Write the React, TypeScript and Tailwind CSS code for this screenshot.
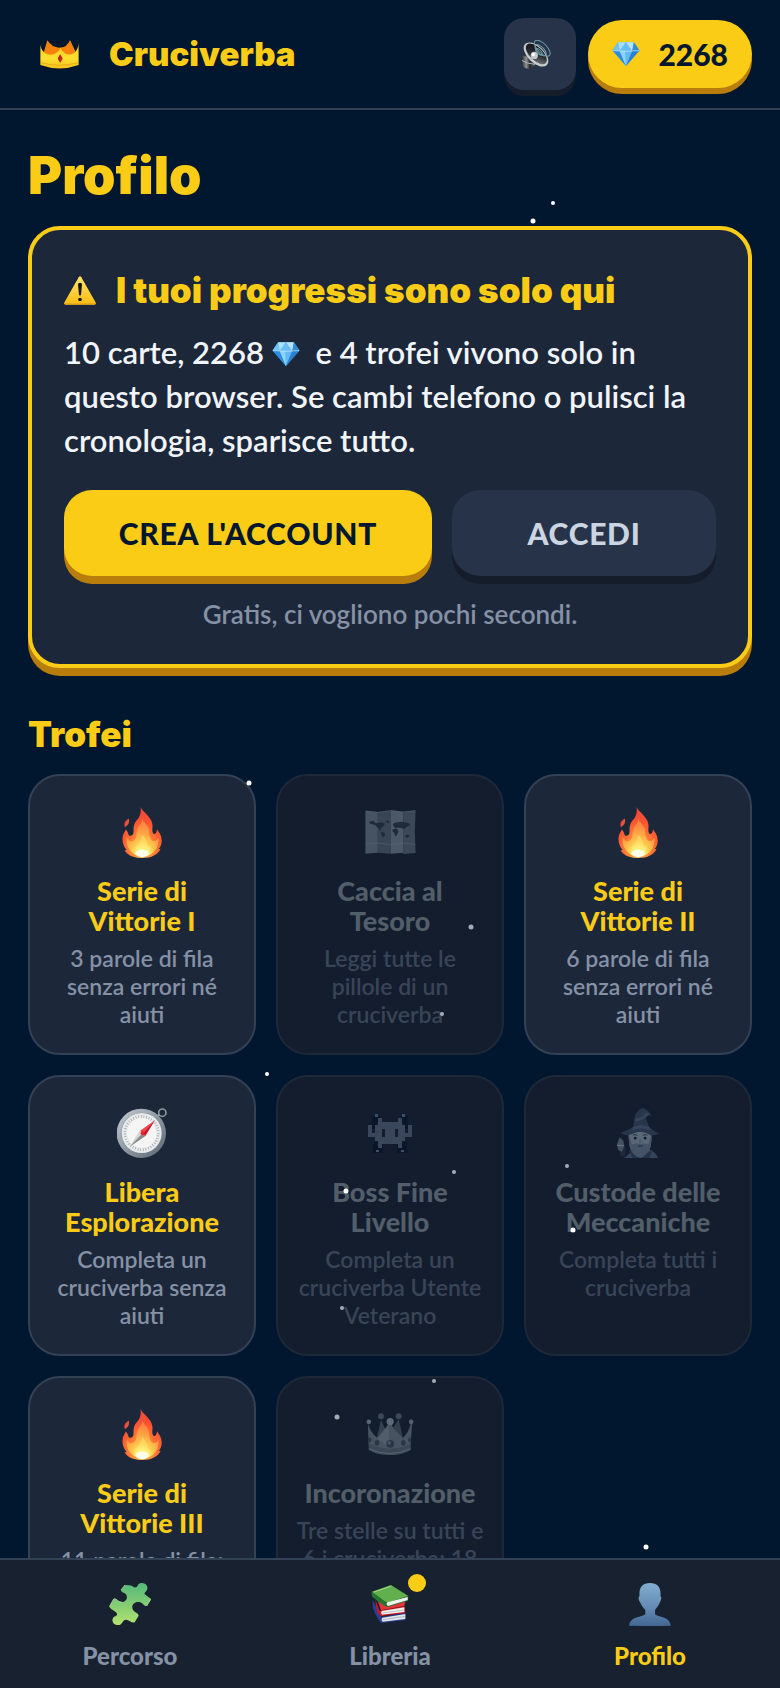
import { useState } from "react";
import type { ReactNode } from "react";

type IconProps = { className?: string };

function LogoCrown({ className }: IconProps) {
  return (
    <svg viewBox="0 0 118 88" className={className} aria-hidden="true">
      <defs>
        <linearGradient id="logoBand" x1="0" y1="0" x2="0" y2="1">
          <stop offset="0" stopColor="#fbc81f" />
          <stop offset="0.6" stopColor="#fde02f" />
          <stop offset="1" stopColor="#f5c21c" />
        </linearGradient>
      </defs>
      <path d="M10 42 L22 1 Q38 25 62 23 Q80 24 91 0 L110 40 L90 56 H30Z" fill="#f5820d" />
      <path d="M1 12 C3 50 50 56 62 23 C74 56 115 50 117 8 V76 Q59 97 1 76Z" fill="url(#logoBand)" />
      <path d="M2 69 Q59 84 116 69" fill="none" stroke="#e9ac17" strokeWidth="3" />
      <path d="M61 43 L69 56 L61 69 L54 56Z" fill="#d3251c" />
      <path d="M61 43 L61 69 L54 56Z" fill="#a3271b" />
    </svg>
  );
}

function Speaker({ className }: IconProps) {
  return (
    <svg viewBox="0 0 90 88" className={className} aria-hidden="true">
      <defs>
        <linearGradient id="spkBody" x1="0" y1="0" x2="1" y2="0">
          <stop offset="0" stopColor="#1c1c1e" />
          <stop offset="0.35" stopColor="#8f9294" />
          <stop offset="0.6" stopColor="#26272a" />
          <stop offset="1" stopColor="#5c5f62" />
        </linearGradient>
        <linearGradient id="spkCone" x1="0" y1="0" x2="1" y2="1">
          <stop offset="0" stopColor="#0b0c0e" />
          <stop offset="0.55" stopColor="#2b2e32" />
          <stop offset="1" stopColor="#8b9094" />
        </linearGradient>
      </defs>
      <path d="M4 46 L0 64 Q1 86 24 88 Q34 87 42 76 L44 60 Z" fill="url(#spkBody)" />
      <path d="M2 62 Q18 72 42 74" fill="none" stroke="#b6b9bb" strokeWidth="3" />
      <ellipse cx="45" cy="44" rx="46" ry="25" transform="rotate(44 45 44)" fill="#c9cccd" />
      <ellipse cx="46" cy="42" rx="40" ry="20" transform="rotate(44 46 42)" fill="url(#spkCone)" />
      <circle cx="40" cy="47" r="11" fill="#c5c8ca" />
      <circle cx="37" cy="44" r="5" fill="#ffffff" />
      <g fill="none" stroke="#6f9daa" strokeWidth="3">
        <ellipse cx="64" cy="25" rx="31" ry="14" transform="rotate(45 64 25)" />
        <ellipse cx="59" cy="31" rx="22" ry="10" transform="rotate(45 59 31)" />
        <ellipse cx="54" cy="36" rx="12" ry="6" transform="rotate(45 54 36)" />
      </g>
    </svg>
  );
}

function Gem({ className }: IconProps) {
  return (
    <svg viewBox="0 0 82 73" className={className} aria-hidden="true">
      <path d="M17 1 H65 L82 26 L41 73 L0 26Z" fill="#48a9ee" />
      <path d="M17 1 L0 26 L22 27Z" fill="#6fc3f6" />
      <path d="M17 1 H41 L22 27Z" fill="#a9e0fc" />
      <path d="M41 1 L22 27 H60Z" fill="#6cbcf4" />
      <path d="M41 1 H65 L60 27Z" fill="#b5e5fd" />
      <path d="M65 1 L82 26 L60 27Z" fill="#3689d6" />
      <path d="M0 26 L22 27 L41 73Z" fill="#2c8ce0" />
      <path d="M22 27 H60 L41 73Z" fill="#63bbf5" />
      <path d="M22 27 H38 L41 73Z" fill="#8dd3fb" />
      <path d="M60 27 L82 26 L41 73Z" fill="#2b7fd3" />
      <path d="M1 26 Q41 31 81 26" fill="none" stroke="#cbeefe" strokeWidth="2" />
    </svg>
  );
}

function Warning({ className }: IconProps) {
  return (
    <svg viewBox="0 0 96 86" className={className} aria-hidden="true">
      <defs>
        <linearGradient id="warnFill" x1="0" y1="0" x2="0" y2="1">
          <stop offset="0" stopColor="#fbe36b" />
          <stop offset="1" stopColor="#fdbd12" />
        </linearGradient>
      </defs>
      <path d="M44 3 Q48 -2 52 3 L95 79 Q97 86 90 86 H6 Q-1 86 1 79Z" fill="url(#warnFill)" />
      <path d="M2 82 Q4 86 8 86 H88 Q94 86 95 82Z" fill="#d99b16" />
      <path d="M42 25 Q42 20 48 20 Q54 20 54 25 L51 56 Q48 61 45 56Z" fill="#15140f" />
      <circle cx="48" cy="70" r="5.5" fill="#15140f" />
    </svg>
  );
}

function Flame({ className }: IconProps) {
  return (
    <svg viewBox="0 0 119 154" className={className} aria-hidden="true">
      <defs>
        <radialGradient id="flameOuter" cx="0.5" cy="0.85" r="0.85">
          <stop offset="0" stopColor="#ffc34a" />
          <stop offset="0.4" stopColor="#fe7a35" />
          <stop offset="0.7" stopColor="#fa5033" />
          <stop offset="1" stopColor="#f04a38" />
        </radialGradient>
        <radialGradient id="flameInner" cx="0.5" cy="0.95" r="0.9">
          <stop offset="0" stopColor="#ffffff" />
          <stop offset="0.2" stopColor="#fff27a" />
          <stop offset="0.4" stopColor="#ffc94e" />
          <stop offset="0.7" stopColor="#ff9c42" />
          <stop offset="1" stopColor="#fd7b3b" />
        </radialGradient>
      </defs>
      <path
        d="M55 0 C61 15 88 28 91 53 C92 65 88 73 94 81 C101 83 104 76 105 67 C110 76 120 84 119 105 C118 115 115 121 110 126 C112 127 114 127 116 126 C108 144 88 154 60 154 C34 154 14 145 6 129 C9 131 11 131 13 130 C4 120 -1 105 1 91 C3 79 8 76 10 68 C15 71 17 78 20 86 C27 89 34 85 34 74 C34 61 34 51 43 41 C54 29 58 15 55 0Z"
        fill="url(#flameOuter)"
      />
      <path
        d="M61 34 C60 49 48 56 45 70 C41 88 44 96 32 103 C22 107 17 98 14 92 C9 112 18 139 58 152 C96 147 112 122 109 93 C104 103 97 105 90 101 C82 96 82 82 80 69 C78 54 64 48 61 34Z"
        fill="url(#flameInner)"
      />
      <path d="M58 82 C61 98 52 103 50 112 C40 118 34 126 38 139 Q58 154 82 141 C89 130 84 120 75 115 C76 101 68 92 58 82Z" fill="#fff07c" opacity="0.4" />
      <ellipse cx="60" cy="140" rx="20" ry="12" fill="#ffffff" opacity="0.75" />
      <path d="M20 35 C7 43 4 51 8 61 C18 55 22 48 20 35Z" fill="#ef4d3e" />
    </svg>
  );
}

function WorldMap({ className }: IconProps) {
  return (
    <svg viewBox="0 0 153 134" className={className} aria-hidden="true">
      <path d="M0 2 L38 6 V130 L0 133Z" fill="#465362" />
      <path d="M38 6 L78 1 V133 L38 130Z" fill="#394555" />
      <path d="M78 1 L115 5 V130 L78 133Z" fill="#4b5867" />
      <path d="M115 5 L153 1 Q148 65 153 131 L115 134Z" fill="#3c4858" />
      <path d="M1 104 L38 101 L78 105 L115 101 L152 105" fill="none" stroke="#5b6876" strokeWidth="4" opacity="0.4" />
      <path d="M1 3 L38 7 L78 2 L115 6 L152 2" fill="none" stroke="#626f7d" strokeWidth="2" opacity="0.6" />
      <g fill="#1f2b3a">
        <path d="M12 36 L25 33 L31 40 L50 37 L60 42 L53 51 L47 56 L46 65 L38 54 L29 46 L13 41Z" />
        <path d="M47 66 L58 69 L60 76 L54 84 L50 78Z" />
        <path d="M64 32 L73 34 L70 40 L64 38Z" />
        <path d="M84 43 L92 38 L112 36 L134 41 L137 46 L128 50 L119 57 L108 55 L100 53 L92 56 L86 50Z" />
        <path d="M84 58 L97 58 L101 66 L95 77 L91 80 L88 70 L82 65Z" />
        <path d="M121 76 L131 75 L134 81 L124 85Z" />
      </g>
    </svg>
  );
}

function Compass({ className }: IconProps) {
  return (
    <svg viewBox="0 0 150 150" className={className} aria-hidden="true">
      <defs>
        <linearGradient id="compassRim" x1="0" y1="0" x2="1" y2="1">
          <stop offset="0" stopColor="#c6ced5" />
          <stop offset="0.5" stopColor="#8f99a3" />
          <stop offset="1" stopColor="#596471" />
        </linearGradient>
      </defs>
      <circle cx="136" cy="14" r="11" fill="none" stroke="#8d969d" strokeWidth="5" />
      <path d="M116 31 L126 20" stroke="#a8afb5" strokeWidth="7" />
      <circle cx="73" cy="76" r="74" fill="url(#compassRim)" />
      <circle cx="74" cy="75" r="61" fill="#7c868f" />
      <circle cx="74" cy="75" r="60" fill="#e9eaeb" />
      <circle cx="74" cy="75" r="50" fill="none" stroke="#9b9ea0" strokeWidth="8" strokeDasharray="2 6" />
      <circle cx="74" cy="75" r="44" fill="#f5f5f5" />
      <path d="M68 68 L85 84 L38 116Z" fill="#d2d4d5" />
      <path d="M77 76 L85 84 L38 116Z" fill="#858789" />
      <path d="M114 37 L69 68 L77 76Z" fill="#ee4650" />
      <path d="M114 37 L85 84 L77 76Z" fill="#ca1522" />
      <circle cx="77" cy="76" r="6" fill="#e5222f" />
    </svg>
  );
}

const INVADER_ROWS = [
  "0001000001000",
  "0001111111000",
  "1011111111101",
  "1011011101101",
  "1111011101111",
  "0011111111100",
  "0001111111000",
  "0001000001000",
];

function Invader({ className }: IconProps) {
  return (
    <svg viewBox="0 0 130 116" className={className} aria-hidden="true" shapeRendering="crispEdges">
      <g fill="#0a172b">
        <path d="M12 6 H34 V26 H24 V44 H10 V20 H12Z M118 6 H96 V26 H106 V44 H120 V20 H118Z" />
        <path d="M15 84 H45 V116 H15Z M85 84 H115 V116 H85Z" />
      </g>
      {INVADER_ROWS.map((row, y) =>
        row.split("").map((cell, x) =>
          cell === "1" ? <rect key={`${x}-${y}`} x={x * 10} y={12 + y * 11} width="11" height="12" fill="#3a465a" /> : null,
        ),
      )}
      <g fill="#414d60">
        <path d="M20 0 h8 v8 h-8Z M102 0 h8 v8 h-8Z M23 106 h8 v7 h-8Z M99 106 h8 v7 h-8Z" />
      </g>
    </svg>
  );
}

function Mage({ className }: IconProps) {
  return (
    <svg viewBox="0 0 129 154" className={className} aria-hidden="true">
      <path d="M8 122 L18 96 L28 122 L25 146 H12Z" fill="#1b2a3e" />
      <path d="M22 151 Q42 137 51 120 L92 121 Q118 132 125 151Z" fill="#35445a" />
      <path d="M37 126 L53 136 L72 152 L91 136 L108 129 L99 151 H48Z" fill="#243349" />
      <path d="M1 110 L9 88 L20 98 L23 115 L16 132 L5 127Z" fill="#45515f" />
      <path d="M1 113 H22" stroke="#6b7680" strokeWidth="3" />
      <path d="M36 78 Q36 55 70 55 Q106 57 105 81 Q109 116 91 134 Q71 153 50 134 Q36 117 36 78Z" fill="#5a6776" />
      <path d="M36 84 Q43 96 46 110 Q60 106 71 108 Q85 106 96 110 Q98 96 105 82 L103 118 Q91 145 71 151 Q44 142 38 113Z" fill="#455366" />
      <circle cx="56" cy="91" r="4" fill="#101c2c" />
      <circle cx="86" cy="91" r="4" fill="#101c2c" />
      <path d="M49 82 Q56 78 62 83 M79 83 Q86 78 93 82" stroke="#263447" strokeWidth="3" fill="none" />
      <path d="M71 92 L67 105 H75Z" fill="#465468" />
      <path d="M64 116 Q71 112 79 116" fill="none" stroke="#222f42" strokeWidth="3" />
      <path d="M12 75 Q32 69 50 57 L55 25 Q60 8 77 0 Q99 6 105 25 Q92 19 86 26 L98 57 Q112 70 128 77 Q105 87 99 80 Q70 63 43 80 Q25 86 12 75Z" fill="#27364b" />
      <path d="M50 57 Q73 47 98 57 L103 67 Q72 56 46 68Z" fill="#35445a" />
      <path d="M57 31 Q78 29 88 15 Q94 14 99 17 Q84 38 55 41Z" fill="#35445a" />
    </svg>
  );
}

function Crown({ className }: IconProps) {
  return (
    <svg viewBox="0 0 145 128" className={className} aria-hidden="true">
      <path d="M31 83 L45 20 L66 70 L99 18 L113 83Z" fill="#35404e" />
      <circle cx="45" cy="10" r="9" fill="#3c4856" />
      <circle cx="99" cy="10" r="9" fill="#3c4856" />
      <path
        d="M5 32 Q13 60 34 76 Q53 61 69 33 H75 Q93 62 112 76 Q129 60 136 32 L140 33 L134 112 Q107 130 67 128 Q28 127 8 112Z"
        fill="#475361"
      />
      <path d="M9 94 Q73 124 136 94 L134 114 Q72 139 9 113Z" fill="#3b4755" />
      <path d="M69 33 L34 76 Q55 92 68 108Z" fill="#576371" opacity="0.7" />
      <path d="M8 109 Q71 138 136 109" stroke="#596573" strokeWidth="3" fill="none" />
      <circle cx="8" cy="27" r="7" fill="#5a6674" />
      <circle cx="73" cy="26" r="11" fill="#5d6976" />
      <circle cx="137" cy="27" r="7" fill="#566270" />
      <g fill="#293646">
        <circle cx="73" cy="94" r="12" />
        <ellipse cx="33" cy="91" rx="7" ry="9" />
        <ellipse cx="113" cy="91" rx="7" ry="9" />
        <ellipse cx="12" cy="82" rx="4" ry="7" />
        <ellipse cx="132" cy="82" rx="4" ry="7" />
      </g>
      <circle cx="70" cy="91" r="6" fill="#435060" />
    </svg>
  );
}

function Puzzle({ className }: IconProps) {
  return (
    <svg viewBox="0 0 126 126" className={className} aria-hidden="true">
      <defs>
        <linearGradient id="puzzleFill" x1="0" y1="0" x2="0" y2="1">
          <stop offset="0" stopColor="#55b77b" />
          <stop offset="0.5" stopColor="#82cc74" />
          <stop offset="1" stopColor="#b3e26e" />
        </linearGradient>
      </defs>
      <path
        d="M48 6 Q67 5 75 13 C82 14 86 10 87 5 C94 -4 113 0 115 12 C117 22 108 26 106 32 C112 39 123 43 126 48 L113 69 C105 71 103 61 94 58 C78 52 64 67 72 80 C76 89 88 88 89 98 L77 118 C69 121 60 111 51 110 C42 110 41 121 33 125 C20 130 7 119 11 107 C15 98 26 100 24 92 C21 84 7 81 1 71 L14 48 C22 44 25 57 38 57 C51 57 58 44 51 34 C47 28 36 29 36 21Z"
        fill="url(#puzzleFill)"
      />
      <path d="M1 71 L14 48 C22 44 25 57 38 57 M48 6 L36 21 M126 48 L113 69" fill="none" stroke="#d2efa9" strokeWidth="2" />
    </svg>
  );
}

function Books({ className }: IconProps) {
  return (
    <svg viewBox="0 0 112 114" className={className} aria-hidden="true">
      <path d="M4 44 L30 96 L103 84 L102 105 L31 114 Q21 110 4 68Z" fill="#293d93" />
      <path d="M33 98 L102 87 V102 L34 110 Q28 104 33 98Z" fill="#dfe4e8" />
      <path d="M34 104 L102 94" stroke="#9da8b2" strokeWidth="2" />
      <path d="M12 43 L24 77 L100 64 L102 84 L29 93 Q14 86 12 43Z" fill="#cf1721" />
      <path d="M31 78 L99 67 V81 L32 89 Q27 83 31 78Z" fill="#eef0f0" />
      <path d="M32 84 L99 75" stroke="#aaaeb1" strokeWidth="2" />
      <path d="M16 39 L51 60 L104 40 L99 63 L29 76Z" fill="#e5343b" />
      <path d="M1 20 L59 0 L111 33 L50 54 Q42 52 1 20Z" fill="#61b04d" />
      <path d="M1 20 L45 54 L111 33 L110 47 L49 66 Q34 62 3 35 Q-1 28 1 20Z" fill="#267731" />
      <path d="M48 52 L109 36 V45 L50 63 Q43 57 48 52Z" fill="#f1f3f0" />
      <path d="M8 21 L58 4" stroke="#a7d489" strokeWidth="3" />
    </svg>
  );
}

function Silhouette({ className }: IconProps) {
  return (
    <svg viewBox="0 0 124 128" className={className} aria-hidden="true">
      <defs>
        <linearGradient id="personFill" x1="0" y1="0" x2="0" y2="1">
          <stop offset="0" stopColor="#83add0" />
          <stop offset="0.6" stopColor="#6189b2" />
          <stop offset="1" stopColor="#426792" />
        </linearGradient>
      </defs>
      <path
        d="M62 0 C85 0 96 15 93 39 C98 42 95 52 91 58 C88 68 81 75 77 80 V92 C85 103 121 97 124 127 Q62 129 0 127 C3 97 40 103 48 92 V80 C42 74 36 67 33 58 C28 52 26 42 31 39 C28 15 39 0 62 0Z"
        fill="url(#personFill)"
      />
    </svg>
  );
}

type Trophy = { title: string; text: string; unlocked: boolean; icon: ReactNode };

const FLAME = <Flame className="h-[51px] w-10" />;

const TROPHIES: Trophy[] = [
  { title: "Serie di Vittorie I", text: "3 parole di fila senza errori né aiuti", unlocked: true, icon: FLAME },
  { title: "Caccia al Tesoro", text: "Leggi tutte le pillole di un cruciverba", unlocked: false, icon: <WorldMap className="h-11 w-[51px]" /> },
  { title: "Serie di Vittorie II", text: "6 parole di fila senza errori né aiuti", unlocked: true, icon: FLAME },
  { title: "Libera Esplorazione", text: "Completa un cruciverba senza aiuti", unlocked: true, icon: <Compass className="size-[50px]" /> },
  { title: "Boss Fine Livello", text: "Completa un cruciverba Utente Veterano", unlocked: false, icon: <Invader className="h-[39px] w-11" /> },
  { title: "Custode delle Meccaniche", text: "Completa tutti i cruciverba", unlocked: false, icon: <Mage className="h-[51px] w-11" /> },
  { title: "Serie di Vittorie III", text: "11 parole di fila: senza errori né aiuti", unlocked: true, icon: FLAME },
  { title: "Incoronazione", text: "Tre stelle su tutti e 6 i cruciverba: 18 stelle", unlocked: false, icon: <Crown className="h-[42px] w-12" /> },
];

function TrophyCard({ title, text, unlocked, icon }: Trophy) {
  return (
    <li
      className={`flex flex-col items-center rounded-[32px] border-2 px-4 pt-7 pb-[25px] text-center ${
        unlocked ? "border-[#334155] bg-[#1d273a]" : "border-[#1d2838] bg-[#131d2e]"
      }`}
    >
      <div className="flex h-14 items-center justify-center">{icon}</div>
      <h3 className={`mt-4 px-2 text-[27px] leading-[30px] font-black ${unlocked ? "text-[#facc15]" : "text-[#525e69]"}`}>{title}</h3>
      <p className={`mt-2 text-[23px] leading-7 font-semibold ${unlocked ? "text-[#8591a5]" : "text-[#394557]"}`}>{text}</p>
    </li>
  );
}

const STARS = [
  { x: 553, y: 203, r: 2, dim: false },
  { x: 533, y: 221, r: 2.5, dim: false },
  { x: 249, y: 783, r: 2.5, dim: false },
  { x: 471, y: 927, r: 2.5, dim: true },
  { x: 442, y: 1014, r: 2, dim: true },
  { x: 267, y: 1074, r: 2, dim: false },
  { x: 346, y: 1191, r: 2.5, dim: false },
  { x: 454, y: 1172, r: 2, dim: true },
  { x: 567, y: 1166, r: 2, dim: true },
  { x: 573, y: 1230, r: 2.5, dim: false },
  { x: 342, y: 1308, r: 2, dim: true },
  { x: 434, y: 1381, r: 2, dim: true },
  { x: 337, y: 1417, r: 2.5, dim: true },
  { x: 646, y: 1547, r: 2.5, dim: false },
];

function StarField() {
  return (
    <svg viewBox="0 0 780 1688" preserveAspectRatio="xMidYMin slice" className="pointer-events-none absolute inset-0 size-full" aria-hidden="true">
      {STARS.map((s) => (
        <circle key={`${s.x}-${s.y}`} cx={s.x} cy={s.y} r={s.r} fill={s.dim ? "#a3adb5" : "#ffffff"} />
      ))}
    </svg>
  );
}

const TABS = [
  { id: "percorso", label: "Percorso", icon: <Puzzle className="size-[42px]" />, badge: false },
  { id: "libreria", label: "Libreria", icon: <Books className="h-[38px] w-[38px]" />, badge: true },
  { id: "profilo", label: "Profilo", icon: <Silhouette className="h-[43px] w-[42px]" />, badge: false },
];

const DISPLAY = "font-['Inter',sans-serif] font-black text-[#facc15]";

export default function App() {
  const [tab, setTab] = useState("profilo");
  const [muted, setMuted] = useState(false);

  return (
    <div className="relative flex h-dvh flex-col overflow-hidden bg-[#01162f] font-['Lato',sans-serif]">
      <header className="flex shrink-0 items-center justify-between border-b-2 border-[#334155] px-7 py-[18px]">
        <div className="flex items-center gap-[30px] pl-3">
          <LogoCrown className="h-[29px] w-[39px]" />
          <span className={`text-[33px] leading-10 ${DISPLAY}`}>Cruciverba</span>
        </div>
        <div className="flex items-center gap-3">
          <button
            type="button"
            aria-label="Audio"
            aria-pressed={muted}
            onClick={() => setMuted(!muted)}
            className="flex size-[72px] items-center justify-center rounded-[20px] bg-[#263349] pr-2 shadow-[0_6px_0_#151d2b]"
          >
            <Speaker className="h-[29px] w-[30px]" />
          </button>
          <button
            type="button"
            className="flex h-[68px] items-center gap-[18px] rounded-full bg-[#facc15] px-6 text-[30px] font-black text-[#01162f] shadow-[0_6px_0_#b97d0c]"
          >
            <Gem className="h-6 w-7" />
            2268
          </button>
        </div>
      </header>

      <main className="min-h-0 flex-1 overflow-y-auto px-7 pt-9 [scrollbar-width:none]">
        <h1 className={`text-[52px] leading-[60px] ${DISPLAY}`}>Profilo</h1>

        <section className="mt-5 rounded-[32px] border-4 border-[#facc15] bg-[#1d273a] px-8 pt-9 pb-8 shadow-[0_8px_0_#b97d0c]">
          <h2 className={`flex items-center gap-5 text-[35px] leading-[48px] ${DISPLAY}`}>
            <Warning className="h-[29px] w-8 shrink-0" />
            <span>I tuoi progressi sono solo qui</span>
          </h2>
          <p className="mt-4 text-[31px] leading-[44px] font-semibold text-[#f1f5f9]">
            10 carte, 2268 <Gem className="mr-2 inline-block h-6 w-7 align-[-2px]" /> e 4 trofei vivono solo in questo browser. Se cambi telefono o
            pulisci la cronologia, sparisce tutto.
          </p>
          <div className="mt-7 flex gap-5">
            <button
              type="button"
              className="h-[86px] flex-[368] rounded-[28px] bg-[#facc15] text-[30px] font-black tracking-wide text-[#01162f] shadow-[0_8px_0_#b97d0c]"
            >
              CREA L&apos;ACCOUNT
            </button>
            <button
              type="button"
              className="h-[86px] flex-[264] rounded-[28px] bg-[#263349] text-[30px] font-black tracking-wide text-[#cbd5e1] shadow-[0_8px_0_#151d2b]"
            >
              ACCEDI
            </button>
          </div>
          <p className="mt-5 text-center text-[26px] leading-9 font-semibold text-[#8591a5]">Gratis, ci vogliono pochi secondi.</p>
        </section>

        <h2 className={`mt-11 text-[35px] leading-[44px] ${DISPLAY}`}>Trofei</h2>
        <ul className="mt-[18px] grid grid-cols-3 gap-5 pb-7">
          {TROPHIES.map((t) => (
            <TrophyCard key={t.title} {...t} />
          ))}
        </ul>
      </main>

      <StarField />

      <nav className="relative grid shrink-0 grid-cols-3 border-t-2 border-[#334155] bg-[#182130] pt-[22px] pb-4">
        {TABS.map((t) => (
          <button
            key={t.id}
            type="button"
            aria-current={tab === t.id ? "page" : undefined}
            onClick={() => setTab(t.id)}
            className={`flex flex-col items-center gap-[14px] text-2xl leading-8 font-black ${tab === t.id ? "text-[#facc15]" : "text-[#8591a5]"}`}
          >
            <span className="relative flex h-11 w-[42px] items-center justify-center">
              {t.icon}
              {t.badge && <span className="absolute -top-2 -right-[15px] size-[18px] rounded-full bg-[#facc15]" />}
            </span>
            {t.label}
          </button>
        ))}
      </nav>
    </div>
  );
}
